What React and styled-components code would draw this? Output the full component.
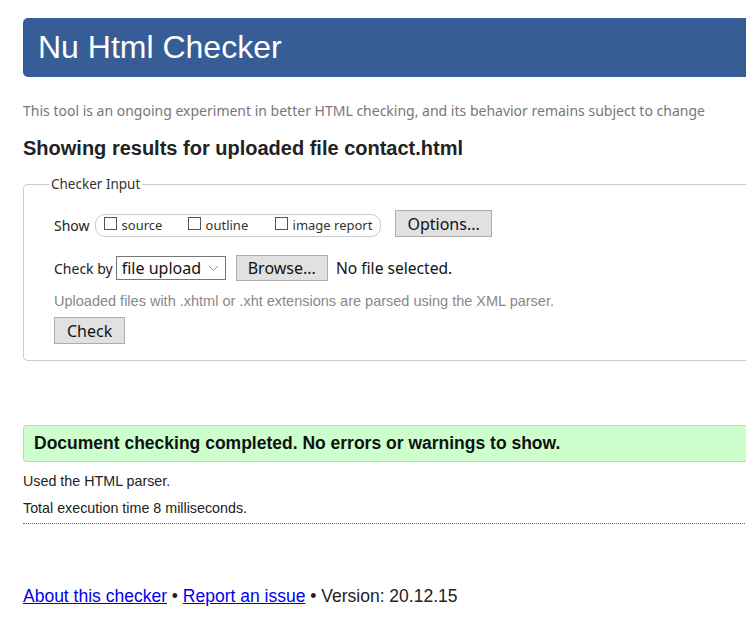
import styled, { createGlobalStyle } from 'styled-components';

const GlobalStyle = createGlobalStyle`
  html, body {
    margin: 0;
    padding: 0;
    overflow: hidden;
    background: #fff;
  }
  body {
    font-family: "Liberation Sans", Arial, sans-serif;
    color: #222;
  }
`;

const Page = styled.div`
  width: 800px;
  padding: 18px 0 40px 23px;
`;

const Banner = styled.h1`
  margin: 0;
  height: 59px;
  box-sizing: border-box;
  padding: 0 15px;
  display: flex;
  align-items: center;
  background: #365d95;
  color: #fff;
  border-radius: 5px 0 0 5px;
  font-weight: normal;
  font-size: 32px;
`;

const Intro = styled.p`
  margin: 24px 0 0;
  font-family: "Noto Sans", "Open Sans", sans-serif;
  font-size: 14px;
  color: #777;
`;

const Title = styled.h2`
  margin: 17px 0 0;
  font-size: 20px;
  font-weight: bold;
  color: #222;
`;

const Fieldset = styled.fieldset`
  margin: 15px 0 0;
  padding: 17px 30px 16px 30px;
  border: 1px solid #ccc;
  border-radius: 5px 0 0 5px;
  border-right: none;
`;

const Legend = styled.legend`
  margin-left: -5px;
  padding: 0 2px;
  font-family: "Noto Sans", "Open Sans", sans-serif;
  font-size: 13.5px;
  color: #333;
`;

const Row = styled.div`
  display: flex;
  align-items: ${(p) => p.$align || 'center'};
  margin-top: ${(p) => p.$top || 0}px;
  font-size: 16px;
`;

const Label = styled.span`
  font-family: "Noto Sans", "Open Sans", sans-serif;
  font-size: 14px;
  color: #222;
  margin-right: ${(p) => p.$gap || 3}px;
  margin-bottom: ${(p) => p.$lift || 0}px;
`;

const Pill = styled.div`
  display: flex;
  align-items: center;
  height: 23px;
  box-sizing: border-box;
  padding: 0 8px 0 8px;
  border: 1px solid #ccc;
  border-radius: 10px;
  margin-right: 14px;
`;

const Option = styled.label`
  display: flex;
  align-items: flex-start;
  width: ${(p) => p.$w}px;
  font-family: "Noto Sans", "Open Sans", sans-serif;
  font-size: 13px;
  color: #333;
  line-height: 21px;
`;

const Box = styled.span`
  width: 13px;
  height: 13px;
  margin-top: 2px;
  margin-right: 5px;
  border: 1px solid #555;
  box-sizing: border-box;
`;

const Button = styled.button`
  height: ${(p) => p.$h || 27}px;
  padding: 0 ${(p) => p.$pad || 11}px;
  background: #e1e1e1;
  border: 1px solid #adadad;
  border-radius: 0;
  font-family: "Noto Sans", "Open Sans", sans-serif;
  font-size: 16px;
  color: #111;
`;

const Select = styled.div`
  width: 110px;
  height: 24px;
  box-sizing: border-box;
  border: 1px solid #767676;
  display: flex;
  align-items: center;
  justify-content: space-between;
  padding: 0 6px 0 5px;
  margin-right: 10px;
  font-family: "Noto Sans", "Open Sans", sans-serif;
  font-size: 16px;
  color: #111;
`;

const Chevron = () => (
  <svg width="11" height="7" viewBox="0 0 11 7">
    <path d="M1 1 L5.5 5.5 L10 1" fill="none" stroke="#999" strokeWidth="1" />
  </svg>
);

const FileText = styled.span`
  margin-left: 8px;
  font-family: "Noto Sans", "Open Sans", sans-serif;
  font-size: 15.6px;
  color: #111;
`;

const Hint = styled.p`
  margin: 12px 0 0;
  font-size: 14.5px;
  color: #888;
`;

const Success = styled.div`
  margin-top: 64px;
  height: 37px;
  box-sizing: border-box;
  padding: 0 10px;
  display: flex;
  align-items: center;
  background: #ccffcc;
  border: 1px solid #ccc;
  border-right: none;
  border-radius: 4px 0 0 4px;
  font-weight: bold;
  font-size: 17.5px;
  color: #111;
`;

const Details = styled.div`
  padding-bottom: 5px;
  border-bottom: 1px dotted #666;
`;

const Note = styled.p`
  margin: ${(p) => p.$top}px 0 0;
  font-size: 14.3px;
  line-height: 20px;
  color: #222;
`;

const Footer = styled.p`
  margin: 62px 0 0;
  font-size: 17.5px;
  color: #222;

  a {
    color: #0000ee;
    text-decoration: underline;
  }
`;

export default function App() {
  return (
    <>
      <GlobalStyle />
      <Page>
        <Banner>Nu Html Checker</Banner>
        <Intro>
          This tool is an ongoing experiment in better HTML checking, and its behavior remains subject to change
        </Intro>
        <Title>Showing results for uploaded file contact.html</Title>
        <Fieldset>
          <Legend>Checker Input</Legend>
          <Row $align="flex-end">
            <Label $gap={5} $lift={2}>Show</Label>
            <Pill>
              <Option $w={84}>
                <Box />
                source
              </Option>
              <Option $w={87}>
                <Box />
                outline
              </Option>
              <Option>
                <Box />
                image report
              </Option>
            </Pill>
            <Button>Options...</Button>
          </Row>
          <Row $top={18}>
            <Label>Check by</Label>
            <Select>
              file upload
              <Chevron />
            </Select>
            <Button $h={26}>Browse...</Button>
            <FileText>No file selected.</FileText>
          </Row>
          <Hint>Uploaded files with .xhtml or .xht extensions are parsed using the XML parser.</Hint>
          <Row $top={8}>
            <Button $pad={12}>Check</Button>
          </Row>
        </Fieldset>
        <Success>Document checking completed. No errors or warnings to show.</Success>
        <Details>
          <Note $top={9}>Used the HTML parser.</Note>
          <Note $top={7}>Total execution time 8 milliseconds.</Note>
        </Details>
        <Footer>
          <a href="#about">About this checker</a> • <a href="#issue">Report an issue</a> • Version: 20.12.15
        </Footer>
      </Page>
    </>
  );
}
